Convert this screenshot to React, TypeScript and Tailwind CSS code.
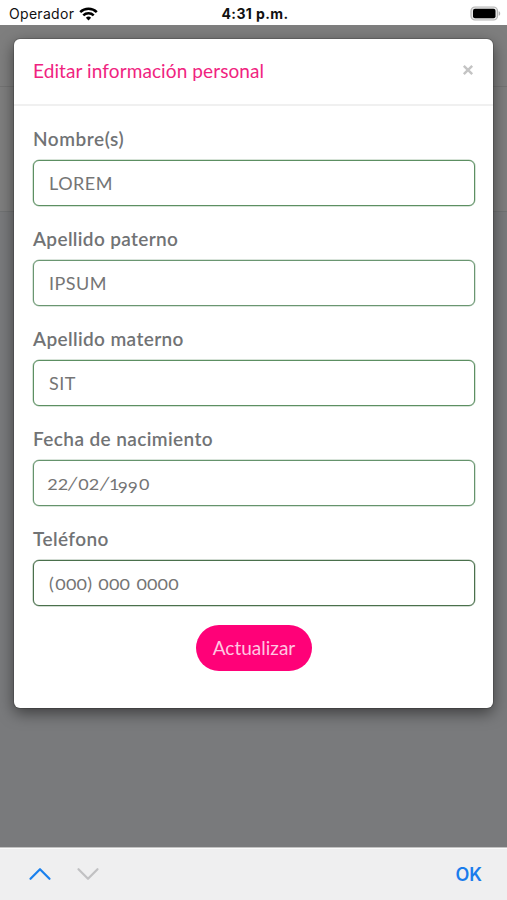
import { useState } from 'react';
import { ChevronUp, ChevronDown } from 'lucide-react';

interface Field {
  id: string;
  label: string;
  value: string;
  labelClass: string;
  borderClass: string;
}

const fields: Field[] = [
  { id: 'nombre', label: 'Nombre(s)', value: 'LOREM', labelClass: 'tracking-[0.55px]', borderClass: 'border-[#5c8f62] shadow-[0_0_0_0.5px_#5c8f6280]' },
  { id: 'paterno', label: 'Apellido paterno', value: 'IPSUM', labelClass: 'tracking-[0.35px]', borderClass: 'border-[#6a9671] shadow-[0_0_0_0.5px_#6a967180]' },
  { id: 'materno', label: 'Apellido materno', value: 'SIT', labelClass: 'tracking-[0.38px]', borderClass: 'border-[#5c8f62] shadow-[0_0_0_0.5px_#5c8f6280]' },
  { id: 'fecha', label: 'Fecha de nacimiento', value: '22/02/1990', labelClass: 'tracking-[0.4px]', borderClass: 'border-[#65936c] shadow-[0_0_0_0.5px_#65936c80]' },
  { id: 'telefono', label: 'Teléfono', value: '(000) 000 0000', labelClass: 'tracking-[0.4px]', borderClass: 'border-[#4a704c] shadow-[0_0_0_0.5px_#4a704c80]' },
];

const digitWidths: Record<string, number> = { '0': 11, '1': 7.2, '2': 9.1, '9': 10.4 };

const runWidth = (run: string) => [...run].reduce((sum, c) => sum + digitWidths[c], 0);

// Old-style figures: 0, 1 and 2 sit at x-height, 9 hangs below the baseline
function FieldValue({ value }: { value: string }) {
  const parts = value.match(/[02]+|1+|9+|\/|[^0129/]+/g) ?? [];
  return (
    <>
      {parts.map((part, i) => {
        if (/[0-9]/.test(part)) {
          const hangs = part.startsWith('9');
          return (
            <span key={i} className="inline-flex justify-center" style={{ width: runWidth(part) }}>
              <span className={hangs ? 'relative top-[3px] scale-x-[1.15] text-[15px]' : 'scale-x-[1.2] text-[15px]'}>{part}</span>
            </span>
          );
        }
        if (part === '/') return <span key={i} className="inline-block skew-x-[-12deg] px-[1.7px]">/</span>;
        return <span key={i} className="tracking-[0.5px]">{part}</span>;
      })}
    </>
  );
}

function StatusBar() {
  return (
    <header className="flex h-[25px] shrink-0 items-center bg-white pt-[2px] font-['Inter',sans-serif] text-[#111]">
      <div className="flex flex-1 items-center gap-[5px] pl-[9px]">
        <span className="text-[14px] leading-none tracking-[0.3px]">Operador</span>
        <svg width="19" height="14" viewBox="0 0 19 14" fill="none" stroke="#000" strokeWidth="2.5">
          <path d="M1.2 5.2a11.8 11.8 0 0 1 16.6 0" />
          <path d="M4.3 8.4a7.4 7.4 0 0 1 10.4 0" />
          <path d="M9.5 13.5 6.9 10.8a3.8 3.8 0 0 1 5.2 0Z" fill="#000" stroke="none" />
        </svg>
      </div>
      <span className="text-[14px] leading-none font-bold tracking-[0.4px]">4:31 p.m.</span>
      <div className="flex flex-1 justify-end pr-[6px]">
        <svg width="31" height="15" viewBox="0 0 31 15">
          <rect x="1" y="1" width="26.5" height="13" rx="4" fill="#e8e8e8" stroke="#b5b5b5" strokeWidth="1.2" />
          <rect x="3" y="2.8" width="22.5" height="9.4" rx="2" fill="#000" />
          <path d="M28.7 5.2c2 .7 2 3.9 0 4.6Z" fill="#b0b0b0" />
        </svg>
      </div>
    </header>
  );
}

export default function App() {
  const [open] = useState(true);

  return (
    <div className="flex h-[900px] w-[507px] flex-col overflow-hidden bg-white font-['Lato',sans-serif]">
      <StatusBar />

      <main className="relative flex flex-1 flex-col overflow-hidden bg-[#797a7c]">
        {/* Dimmed page under the modal */}
        <div className="h-[62px] border-b border-[#737373] bg-[#7e7e7e]" />
        <div className="h-[125px] border-b border-[#707273] bg-[#7e7e7e]" />

        {open && (
          <div className="absolute inset-0 px-[14px] pt-[13.5px]">
            <section className="h-[669.5px] rounded-[6px] bg-white shadow-[0_0_0_1px_rgba(0,0,0,0.15),0_5px_15px_rgba(0,0,0,0.5)]">
              <div className="flex h-[67.5px] items-center justify-between border-b-2 border-[#f0f0f0] pr-[19px] pl-[19px]">
                <h1 className="text-[19px] tracking-[0.1px] text-[#f0237f]">Editar información personal</h1>
                <button aria-label="Cerrar" className="mb-[3px]">
                  <svg width="12" height="12" viewBox="0 0 12 12" stroke="#c4c4c4" strokeWidth="2.4">
                    <path d="M1.8 1.8l8.4 8.4M10.2 1.8l-8.4 8.4" />
                  </svg>
                </button>
              </div>

              <form className="flex flex-col pt-[20px] pr-[18px] pl-[19px]" onSubmit={(e) => e.preventDefault()}>
                {fields.map((field) => (
                  <div key={field.id} className="h-[100.1px]">
                    <div className={`h-[34px] text-[19px] leading-[26px] font-semibold whitespace-nowrap text-[#717375] ${field.labelClass}`}>
                      {field.label}
                    </div>
                    <div className={`flex h-[46px] items-center rounded-[6px] border bg-white pl-[15px] text-[18px] tracking-[0.1px] whitespace-pre text-[#757575] ${field.borderClass}`}>
                      <span>
                        <FieldValue value={field.value} />
                      </span>
                    </div>
                  </div>
                ))}
                <button className="mx-auto -mt-px h-[46px] w-[116px] rounded-full bg-[#ff0178] text-[19px] text-[#ffc6e1]">
                  Actualizar
                </button>
              </form>
            </section>
          </div>
        )}
      </main>

      <footer className="flex h-[53px] shrink-0 items-center border-t border-[#c2c2c2] bg-[#efeff0] pr-[25px] pl-[21px] shadow-[inset_0_1px_0_#fafafa]">
        <ChevronUp className="h-[38px] w-[38px] text-[#1a80ee]" strokeWidth={1.4} />
        <ChevronDown className="ml-[10px] h-[38px] w-[38px] text-[#c1c1c3]" strokeWidth={1.4} />
        <span className="ml-auto font-['Inter',sans-serif] text-[18px] font-semibold text-[#1a7cec]">OK</span>
      </footer>
    </div>
  );
}
